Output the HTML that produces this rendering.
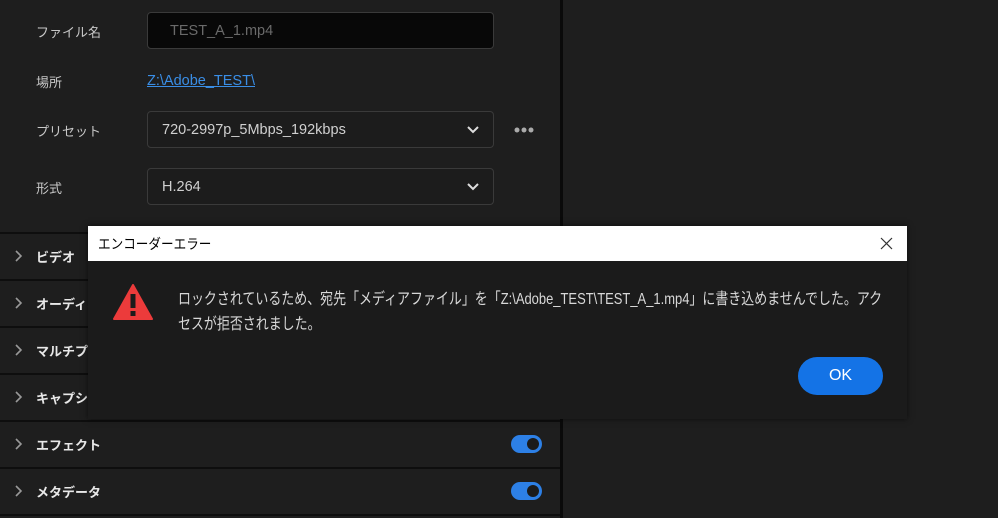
<!DOCTYPE html>
<html><head><meta charset="utf-8"><style>
*{margin:0;padding:0;box-sizing:border-box}
body{width:998px;height:518px;overflow:hidden;background:#1e1e1e;font-family:"Liberation Sans","Noto Sans CJK JP",sans-serif;position:relative;color:#ccc}
.abs{position:absolute}
svg{display:block}
.lbl{position:absolute;left:36px;font-size:13px;color:#c8c8c8}
.box{position:absolute;left:147px;width:347px;border:1px solid #3a3a3a;border-radius:4px;background:#1c1c1c;height:37px;font-size:14.5px;color:#d0d0d0;padding-left:14px;line-height:36px}
.chev{position:absolute;right:14px;top:14px}
.row{position:absolute;left:0;width:560px;height:45px;border-top:2px solid #0e0e0e}
.row span{position:absolute;left:36px;top:13px;font-size:13px;font-weight:bold;color:#e8e8e8}
.row svg.c{position:absolute;left:15px;top:16px}
.tog{position:absolute;left:511px;top:13px;width:31px;height:18px;border-radius:9px;background:#2d80e6}
.tog:after{content:"";position:absolute;right:3px;top:3px;width:12px;height:12px;border-radius:50%;background:#1b1b1b}
.ml{white-space:nowrap;transform-origin:0 0;display:block}
</style></head><body>
<div class="abs" style="left:560px;top:0;width:3px;height:518px;background:#0a0a0a"></div>
<div class="lbl" style="top:22px">ファイル名</div>
<div class="box" style="top:12px;background:#080808;color:#6a6a6a;padding-left:22px">TEST_A_1.mp4</div>
<div class="lbl" style="top:72px">場所</div>
<div class="abs" style="left:147px;top:73px;font-size:14.5px;color:#3a8ee6;text-decoration:underline">Z:\Adobe_TEST\</div>
<div class="lbl" style="top:121px">プリセット</div>
<div class="box" style="top:111px">720-2997p_5Mbps_192kbps<svg class="chev" width="12" height="8"><path d="M1 1L6 6L11 1" stroke="#ddd" stroke-width="2" fill="none"/></svg></div>
<div class="abs" style="left:514px;top:127px"><svg width="20" height="6"><circle cx="3" cy="3" r="2.5" fill="#aaa"/><circle cx="10" cy="3" r="2.5" fill="#aaa"/><circle cx="17" cy="3" r="2.5" fill="#aaa"/></svg></div>
<div class="lbl" style="top:178px">形式</div>
<div class="box" style="top:168px">H.264<svg class="chev" width="12" height="8"><path d="M1 1L6 6L11 1" stroke="#ddd" stroke-width="2" fill="none"/></svg></div>

<div class="row" style="top:232px"><svg class="c" width="8" height="12"><path d="M1 1L6 6L1 11" stroke="#999" stroke-width="1.6" fill="none"/></svg><span>ビデオ</span></div>
<div class="row" style="top:279px"><svg class="c" width="8" height="12"><path d="M1 1L6 6L1 11" stroke="#999" stroke-width="1.6" fill="none"/></svg><span>オーディオ</span></div>
<div class="row" style="top:326px"><svg class="c" width="8" height="12"><path d="M1 1L6 6L1 11" stroke="#999" stroke-width="1.6" fill="none"/></svg><span>マルチプレ</span></div>
<div class="row" style="top:373px"><svg class="c" width="8" height="12"><path d="M1 1L6 6L1 11" stroke="#999" stroke-width="1.6" fill="none"/></svg><span>キャプション</span></div>
<div class="row" style="top:420px"><svg class="c" width="8" height="12"><path d="M1 1L6 6L1 11" stroke="#999" stroke-width="1.6" fill="none"/></svg><span>エフェクト</span><div class="tog"></div></div>
<div class="row" style="top:467px"><svg class="c" width="8" height="12"><path d="M1 1L6 6L1 11" stroke="#999" stroke-width="1.6" fill="none"/></svg><span>メタデータ</span><div class="tog"></div></div>
<div class="abs" style="left:0;top:514px;width:560px;height:2px;background:#0e0e0e"></div>

<div class="abs" style="left:88px;top:226px;width:819px;height:193px;background:#1b1b1b;box-shadow:0 0 6px rgba(0,0,0,.6)">
 <div style="height:35px;background:#fff;color:#000;font-size:14px;padding:8px 0 0 10px"><span class="ml" style="transform:scaleX(.9)">エンコーダーエラー</span>
  <svg style="position:absolute;right:14px;top:11px" width="13" height="13"><path d="M1 1L12 12M12 1L1 12" stroke="#333" stroke-width="1.2"/></svg></div>
 <svg style="position:absolute;left:24px;top:57px" width="42" height="38"><path d="M21 2L40 36H2Z" fill="#ec3b3b" stroke="#ec3b3b" stroke-width="2" stroke-linejoin="round"/><rect x="18.5" y="11" width="5" height="14" fill="#1b1b1b"/><rect x="18.5" y="28" width="5" height="5" fill="#1b1b1b"/></svg>
 <div style="position:absolute;left:90px;top:61px;font-size:16px;line-height:25px;color:#d8d8d8">
  <span class="ml" style="transform:scaleX(.81)">ロックされているため、宛先「メディアファイル」を「Z:\Adobe_TEST\TEST_A_1.mp4」に書き込めませんでした。アク</span>
  <span class="ml" style="transform:scaleX(.81)">セスが拒否されました。</span>
 </div>
 <div style="position:absolute;left:710px;top:131px;width:85px;height:38px;border-radius:19px;background:#1473e6;color:#fff;font-size:16px;text-align:center;line-height:38px">OK</div>
</div>
</body></html>
